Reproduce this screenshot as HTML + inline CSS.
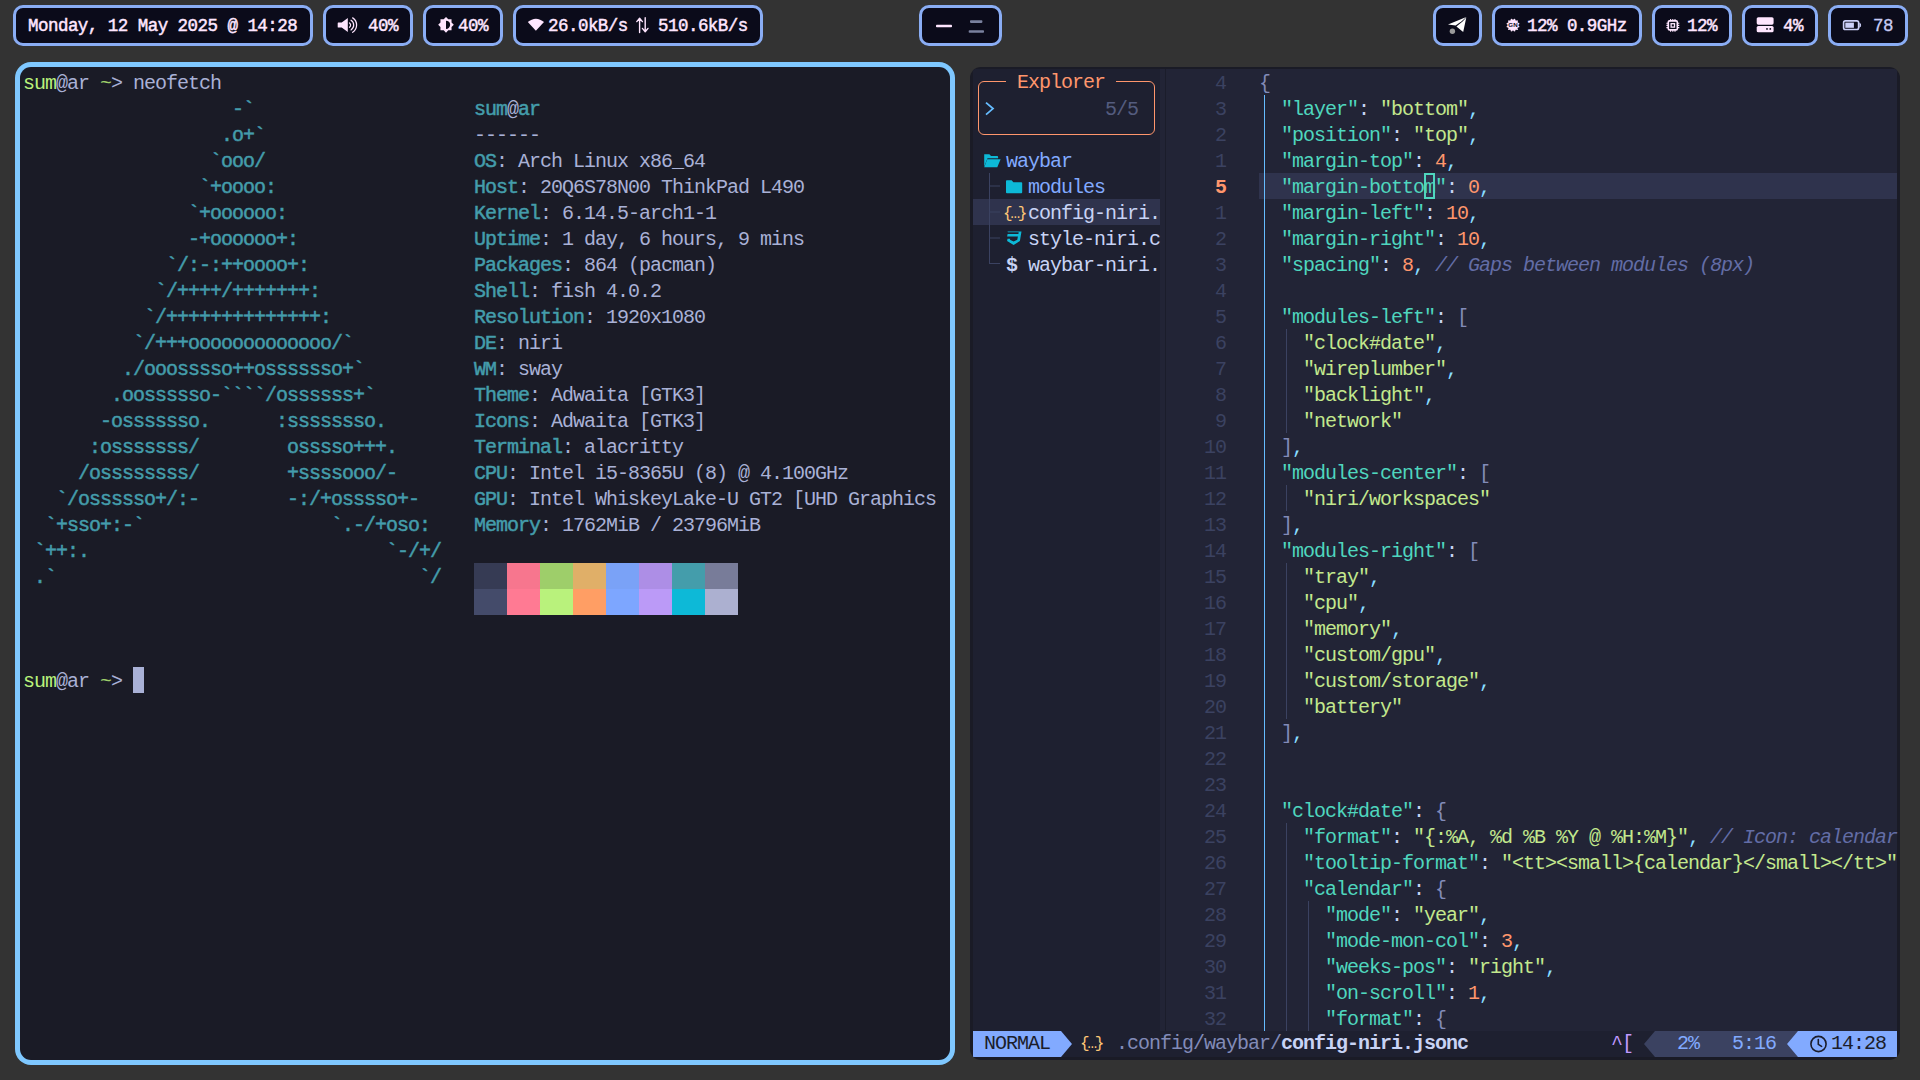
<!DOCTYPE html>
<html><head><meta charset="utf-8">
<style>
html,body{margin:0;padding:0}
body{width:1920px;height:1080px;overflow:hidden;background:#333333;position:relative;font-family:"Liberation Mono",monospace}
.t{position:absolute;height:26px;line-height:26px;white-space:pre;font-size:20px;letter-spacing:-1px}
.blk{position:absolute;width:33px;height:26px}
.mod{position:absolute;top:5px;height:35px;border:3px solid #8aadf4;border-radius:10px;background:#0b0b1a;box-sizing:content-box}
.wt{position:absolute;top:6px;height:41px;line-height:41px;white-space:pre;font-size:17.5px;letter-spacing:-0.53px;font-weight:normal;-webkit-text-stroke:0.45px #ffe6ff;color:#ffe6ff}
</style></head><body>
<div id="desk">
<div class="mod" style="left:13px;width:294px"></div>
<div class="mod" style="left:323px;width:84px"></div>
<div class="mod" style="left:423px;width:74px"></div>
<div class="mod" style="left:513px;width:244px"></div>
<div class="mod" style="left:919px;width:77px"></div>
<div class="mod" style="left:1433px;width:43px"></div>
<div class="mod" style="left:1492px;width:144px"></div>
<div class="mod" style="left:1652px;width:74px"></div>
<div class="mod" style="left:1742px;width:70px"></div>
<div class="mod" style="left:1828px;width:74px"></div>
<div class="wt" style="left:28px">Monday, 12 May 2025 @ 14:28</div>
<div class="wt" style="left:368px">40%</div>
<div class="wt" style="left:458px">40%</div>
<div class="wt" style="left:548px">26.0kB/s</div>
<div class="wt" style="left:658px">510.6kB/s</div>
<div class="wt" style="left:1527px">12% 0.9GHz</div>
<div class="wt" style="left:1687px">12%</div>
<div class="wt" style="left:1783px">4%</div>
<div class="wt" style="left:1873px;color:#c8ccf5;-webkit-text-stroke:0.3px #c8ccf5">78</div>
<svg style="position:absolute;left:0;top:0" width="1920" height="50"><path d="M338.3 22.6 h3.4 l6.1 -4.6 v14.1 l-6.1 -4.6 h-3.4 a0.6 0.6 0 0 1 -0.6 -0.6 v-3.7 a0.6 0.6 0 0 1 0.6 -0.6z" fill="#ffe6ff"/><path d="M349.49 22.97 A2.6 2.6 0 0 1 349.49 27.23 M351.02 20.27 A5.7 5.7 0 0 1 351.02 29.93 M352.68 17.89 A8.6 8.6 0 0 1 352.68 32.31" fill="none" stroke="#ffe6ff" stroke-width="1.25" stroke-linecap="round"/><g transform="translate(437.7 16.5) scale(0.692)"><path fill-rule="evenodd" d="M12,18V6A6,6 0 0,1 18,12A6,6 0 0,1 12,18M20,15.31L23.31,12L20,8.69V4H15.31L12,0.69L8.69,4H4V8.69L0.69,12L4,15.31V20H8.69L12,23.31L15.31,20H20V15.31Z" fill="#ffe6ff"/></g><g transform="translate(527.8 16.6) scale(0.675)"><path d="M12,3C7.79,3 3.7,4.95 0,7.86L12,21L24,7.86C20.3,4.94 16.21,3 12,3Z" fill="#ffe6ff"/></g><path d="M639.6 32.5 V18.5 M636.8 21.6 L639.6 18.2 L642.4 21.6 M645.2 17.8 V31.6 M642.4 28.4 L645.2 31.8 L648 28.4" fill="none" stroke="#ffe6ff" stroke-width="1.4" stroke-linecap="round" stroke-linejoin="round"/><rect x="936" y="24.7" width="16" height="2.6" rx="0.8" fill="#ffe6ff"/><rect x="970" y="20.3" width="12.4" height="2.6" rx="0.8" fill="#7a819e"/><rect x="968.7" y="30.2" width="15.3" height="2.6" rx="0.8" fill="#7a819e"/><path d="M1448 24.6 L1466.3 16.9 L1461.6 21.2 L1455.6 25.6 Z" fill="#ffffff"/><path d="M1456.4 26.6 L1462.6 21.5 L1466.3 17.6 L1463.2 32 Z" fill="#ffffff"/><circle cx="1452.4" cy="31.2" r="2.7" fill="#9a9a9a"/><circle cx="1513" cy="25.1" r="5.6" fill="#ffe6ff"/><circle cx="1518.51" cy="26.58" r="0.9" fill="#ffe6ff"/><circle cx="1517.03" cy="29.13" r="0.9" fill="#ffe6ff"/><circle cx="1514.48" cy="30.61" r="0.9" fill="#ffe6ff"/><circle cx="1511.52" cy="30.61" r="0.9" fill="#ffe6ff"/><circle cx="1508.97" cy="29.13" r="0.9" fill="#ffe6ff"/><circle cx="1507.49" cy="26.58" r="0.9" fill="#ffe6ff"/><circle cx="1507.49" cy="23.62" r="0.9" fill="#ffe6ff"/><circle cx="1508.97" cy="21.07" r="0.9" fill="#ffe6ff"/><circle cx="1511.52" cy="19.59" r="0.9" fill="#ffe6ff"/><circle cx="1514.48" cy="19.59" r="0.9" fill="#ffe6ff"/><circle cx="1517.03" cy="21.07" r="0.9" fill="#ffe6ff"/><circle cx="1518.51" cy="23.62" r="0.9" fill="#ffe6ff"/><text x="1513" y="27.3" font-family="Liberation Sans" font-weight="bold" font-size="6.2" text-anchor="middle" fill="#0b0b1a">GN</text><rect x="1668.3" y="20.9" width="9" height="9" rx="1.2" fill="none" stroke="#ffe6ff" stroke-width="1.6"/><rect x="1671.1" y="23.7" width="3.4" height="3.4" fill="none" stroke="#ffe6ff" stroke-width="1.3"/><path d="M1670.6 19 v2.2 M1670.6 29.6 v2.2 M1666.4 23.2 h2.2 M1677.1 23.2 h2.2 M1672.8 19 v2.2 M1672.8 29.6 v2.2 M1666.4 25.4 h2.2 M1677.1 25.4 h2.2 M1675.0 19 v2.2 M1675.0 29.6 v2.2 M1666.4 27.6 h2.2 M1677.1 27.6 h2.2" stroke="#ffe6ff" stroke-width="1.1"/><rect x="1756.7" y="17.2" width="16.9" height="7.5" rx="1.6" fill="#ffe6ff"/><rect x="1756.7" y="26" width="16.9" height="6.3" rx="1.6" fill="#ffe6ff"/><circle cx="1767" cy="28.9" r="0.9" fill="#0b0b1a"/><circle cx="1770.3" cy="28.9" r="0.9" fill="#0b0b1a"/><rect x="1843.6" y="20.9" width="15" height="8.6" rx="1.8" fill="none" stroke="#ccd0f8" stroke-width="1.6"/><rect x="1845.3" y="22.6" width="8.6" height="5.2" fill="#ccd0f8"/><path d="M1859.4 23.2 a1.2 2 0 0 1 0 4" fill="#ccd0f8" stroke="#ccd0f8" stroke-width="1"/></svg>
</div>
<div style="position:absolute;left:15px;top:62px;width:940px;height:1003px;border-radius:16px;background:#7fc8ff"></div>
<div style="position:absolute;left:20px;top:67px;width:930px;height:993px;border-radius:11px;background:#1a1b26;overflow:hidden">
<div style="position:absolute;left:-20px;top:-67px">
<div class="t" style="left:23px;top:71px;color:#b9f27c">sum</div>
<div class="t" style="left:56px;top:71px;color:#a9b1d6">@ar</div>
<div class="t" style="left:100px;top:71px;color:#9ece6a">~</div>
<div class="t" style="left:111px;top:71px;color:#a9b1d6">&gt;</div>
<div class="t" style="left:133px;top:71px;color:#a9b1d6">neofetch</div>
<div class="t" style="left:232px;top:97px;color:#449dab;-webkit-text-stroke:0.5px #449dab">-`</div>
<div class="t" style="left:221px;top:123px;color:#449dab;-webkit-text-stroke:0.5px #449dab">.o+`</div>
<div class="t" style="left:210px;top:149px;color:#449dab;-webkit-text-stroke:0.5px #449dab">`ooo/</div>
<div class="t" style="left:199px;top:175px;color:#449dab;-webkit-text-stroke:0.5px #449dab">`+oooo:</div>
<div class="t" style="left:188px;top:201px;color:#449dab;-webkit-text-stroke:0.5px #449dab">`+oooooo:</div>
<div class="t" style="left:188px;top:227px;color:#449dab;-webkit-text-stroke:0.5px #449dab">-+oooooo+:</div>
<div class="t" style="left:166px;top:253px;color:#449dab;-webkit-text-stroke:0.5px #449dab">`/:-:++oooo+:</div>
<div class="t" style="left:155px;top:279px;color:#449dab;-webkit-text-stroke:0.5px #449dab">`/++++/+++++++:</div>
<div class="t" style="left:144px;top:305px;color:#449dab;-webkit-text-stroke:0.5px #449dab">`/++++++++++++++:</div>
<div class="t" style="left:133px;top:331px;color:#449dab;-webkit-text-stroke:0.5px #449dab">`/+++ooooooooooooo/`</div>
<div class="t" style="left:122px;top:357px;color:#449dab;-webkit-text-stroke:0.5px #449dab">./ooosssso++osssssso+`</div>
<div class="t" style="left:111px;top:383px;color:#449dab;-webkit-text-stroke:0.5px #449dab">.oossssso-````/ossssss+`</div>
<div class="t" style="left:100px;top:409px;color:#449dab;-webkit-text-stroke:0.5px #449dab">-osssssso.      :ssssssso.</div>
<div class="t" style="left:89px;top:435px;color:#449dab;-webkit-text-stroke:0.5px #449dab">:osssssss/        osssso+++.</div>
<div class="t" style="left:78px;top:461px;color:#449dab;-webkit-text-stroke:0.5px #449dab">/ossssssss/        +ssssooo/-</div>
<div class="t" style="left:56px;top:487px;color:#449dab;-webkit-text-stroke:0.5px #449dab">`/ossssso+/:-        -:/+osssso+-</div>
<div class="t" style="left:45px;top:513px;color:#449dab;-webkit-text-stroke:0.5px #449dab">`+sso+:-`                 `.-/+oso:</div>
<div class="t" style="left:34px;top:539px;color:#449dab;-webkit-text-stroke:0.5px #449dab">`++:.                           `-/+/</div>
<div class="t" style="left:34px;top:565px;color:#449dab;-webkit-text-stroke:0.5px #449dab">.`                                 `/</div>
<div class="t" style="left:474px;top:97px;color:#449dab;-webkit-text-stroke:0.5px #449dab">sum</div>
<div class="t" style="left:507px;top:97px;color:#a9b1d6">@</div>
<div class="t" style="left:518px;top:97px;color:#449dab;-webkit-text-stroke:0.5px #449dab">ar</div>
<div class="t" style="left:474px;top:123px;color:#a9b1d6">------</div>
<div class="t" style="left:474px;top:149px;color:#449dab;-webkit-text-stroke:0.5px #449dab">OS</div>
<div class="t" style="left:496px;top:149px;color:#a9b1d6">: Arch Linux x86_64</div>
<div class="t" style="left:474px;top:175px;color:#449dab;-webkit-text-stroke:0.5px #449dab">Host</div>
<div class="t" style="left:518px;top:175px;color:#a9b1d6">: 20Q6S78N00 ThinkPad L490</div>
<div class="t" style="left:474px;top:201px;color:#449dab;-webkit-text-stroke:0.5px #449dab">Kernel</div>
<div class="t" style="left:540px;top:201px;color:#a9b1d6">: 6.14.5-arch1-1</div>
<div class="t" style="left:474px;top:227px;color:#449dab;-webkit-text-stroke:0.5px #449dab">Uptime</div>
<div class="t" style="left:540px;top:227px;color:#a9b1d6">: 1 day, 6 hours, 9 mins</div>
<div class="t" style="left:474px;top:253px;color:#449dab;-webkit-text-stroke:0.5px #449dab">Packages</div>
<div class="t" style="left:562px;top:253px;color:#a9b1d6">: 864 (pacman)</div>
<div class="t" style="left:474px;top:279px;color:#449dab;-webkit-text-stroke:0.5px #449dab">Shell</div>
<div class="t" style="left:529px;top:279px;color:#a9b1d6">: fish 4.0.2</div>
<div class="t" style="left:474px;top:305px;color:#449dab;-webkit-text-stroke:0.5px #449dab">Resolution</div>
<div class="t" style="left:584px;top:305px;color:#a9b1d6">: 1920x1080</div>
<div class="t" style="left:474px;top:331px;color:#449dab;-webkit-text-stroke:0.5px #449dab">DE</div>
<div class="t" style="left:496px;top:331px;color:#a9b1d6">: niri</div>
<div class="t" style="left:474px;top:357px;color:#449dab;-webkit-text-stroke:0.5px #449dab">WM</div>
<div class="t" style="left:496px;top:357px;color:#a9b1d6">: sway</div>
<div class="t" style="left:474px;top:383px;color:#449dab;-webkit-text-stroke:0.5px #449dab">Theme</div>
<div class="t" style="left:529px;top:383px;color:#a9b1d6">: Adwaita [GTK3]</div>
<div class="t" style="left:474px;top:409px;color:#449dab;-webkit-text-stroke:0.5px #449dab">Icons</div>
<div class="t" style="left:529px;top:409px;color:#a9b1d6">: Adwaita [GTK3]</div>
<div class="t" style="left:474px;top:435px;color:#449dab;-webkit-text-stroke:0.5px #449dab">Terminal</div>
<div class="t" style="left:562px;top:435px;color:#a9b1d6">: alacritty</div>
<div class="t" style="left:474px;top:461px;color:#449dab;-webkit-text-stroke:0.5px #449dab">CPU</div>
<div class="t" style="left:507px;top:461px;color:#a9b1d6">: Intel i5-8365U (8) @ 4.100GHz</div>
<div class="t" style="left:474px;top:487px;color:#449dab;-webkit-text-stroke:0.5px #449dab">GPU</div>
<div class="t" style="left:507px;top:487px;color:#a9b1d6">: Intel WhiskeyLake-U GT2 [UHD Graphics</div>
<div class="t" style="left:474px;top:513px;color:#449dab;-webkit-text-stroke:0.5px #449dab">Memory</div>
<div class="t" style="left:540px;top:513px;color:#a9b1d6">: 1762MiB / 23796MiB</div>
<div class="blk" style="left:474px;top:563px;background:#363b54"></div>
<div class="blk" style="left:474px;top:589px;background:#444b6a"></div>
<div class="blk" style="left:507px;top:563px;background:#f7768e"></div>
<div class="blk" style="left:507px;top:589px;background:#ff7a93"></div>
<div class="blk" style="left:540px;top:563px;background:#9ece6a"></div>
<div class="blk" style="left:540px;top:589px;background:#b9f27c"></div>
<div class="blk" style="left:573px;top:563px;background:#e0af68"></div>
<div class="blk" style="left:573px;top:589px;background:#ff9e64"></div>
<div class="blk" style="left:606px;top:563px;background:#7aa2f7"></div>
<div class="blk" style="left:606px;top:589px;background:#7da6ff"></div>
<div class="blk" style="left:639px;top:563px;background:#ad8ee6"></div>
<div class="blk" style="left:639px;top:589px;background:#bb9af7"></div>
<div class="blk" style="left:672px;top:563px;background:#449dab"></div>
<div class="blk" style="left:672px;top:589px;background:#0db9d7"></div>
<div class="blk" style="left:705px;top:563px;background:#787c99"></div>
<div class="blk" style="left:705px;top:589px;background:#acb0d0"></div>
<div class="t" style="left:23px;top:669px;color:#b9f27c">sum</div>
<div class="t" style="left:56px;top:669px;color:#a9b1d6">@ar</div>
<div class="t" style="left:100px;top:669px;color:#9ece6a">~</div>
<div class="t" style="left:111px;top:669px;color:#a9b1d6">&gt;</div>
<div style="position:absolute;left:133px;top:667px;width:11px;height:26px;background:#a9b1d6"></div>
</div></div>
<div style="position:absolute;left:970px;top:67px;width:930px;height:993px;border-radius:11px;background:#1a1b26;overflow:hidden">
<div style="position:absolute;left:-970px;top:-67px">
<div style="position:absolute;left:973px;top:69px;width:187px;height:962px;background:#1e2030"></div>
<div style="position:absolute;left:1160px;top:69px;width:737px;height:962px;background:#222436"></div>
<div style="position:absolute;left:1165px;top:69px;width:1px;height:962px;background:#1b1d2b"></div>
<div style="position:absolute;left:973px;top:199px;width:187px;height:26px;background:#2f334d"></div>
<div style="position:absolute;left:1259px;top:173px;width:638px;height:26px;background:#2f334d"></div>
<div style="position:absolute;left:978px;top:81px;width:175px;height:52px;border:1px solid #ff966c;border-radius:6px;box-sizing:content-box"></div>
<div style="position:absolute;left:1006px;top:77px;width:110px;height:10px;background:#1e2030"></div>
<div class="t" style="left:1017px;top:70px;color:#ff966c">Explorer</div>
<div class="t" style="left:1105px;top:97px;color:#545c7e">5/5</div>
<svg style="position:absolute;left:0;top:0" width="1920" height="1080"><path d="M986 102.6 L993 108.6 L986 114.6" fill="none" stroke="#65bcff" stroke-width="1.8"/></svg>
<div class="t" style="left:1006px;top:149px;color:#82aaff">waybar</div>
<div class="t" style="left:1028px;top:175px;color:#82aaff">modules</div>
<div class="t" style="left:1028px;top:201px;color:#c8d3f5">config-niri.</div>
<div class="t" style="left:1028px;top:227px;color:#c8d3f5">style-niri.c</div>
<div class="t" style="left:1006px;top:253px;color:#c8d3f5;font-weight:bold">$</div>
<div class="t" style="left:1028px;top:253px;color:#c8d3f5">waybar-niri.</div>
<div class="t" style="left:1215px;top:71px;color:#3b4261">4</div>
<div class="t" style="left:1215px;top:97px;color:#3b4261">3</div>
<div class="t" style="left:1215px;top:123px;color:#3b4261">2</div>
<div class="t" style="left:1215px;top:149px;color:#3b4261">1</div>
<div class="t" style="left:1215px;top:175px;color:#ff966c;font-weight:bold">5</div>
<div class="t" style="left:1215px;top:201px;color:#3b4261">1</div>
<div class="t" style="left:1215px;top:227px;color:#3b4261">2</div>
<div class="t" style="left:1215px;top:253px;color:#3b4261">3</div>
<div class="t" style="left:1215px;top:279px;color:#3b4261">4</div>
<div class="t" style="left:1215px;top:305px;color:#3b4261">5</div>
<div class="t" style="left:1215px;top:331px;color:#3b4261">6</div>
<div class="t" style="left:1215px;top:357px;color:#3b4261">7</div>
<div class="t" style="left:1215px;top:383px;color:#3b4261">8</div>
<div class="t" style="left:1215px;top:409px;color:#3b4261">9</div>
<div class="t" style="left:1204px;top:435px;color:#3b4261">10</div>
<div class="t" style="left:1204px;top:461px;color:#3b4261">11</div>
<div class="t" style="left:1204px;top:487px;color:#3b4261">12</div>
<div class="t" style="left:1204px;top:513px;color:#3b4261">13</div>
<div class="t" style="left:1204px;top:539px;color:#3b4261">14</div>
<div class="t" style="left:1204px;top:565px;color:#3b4261">15</div>
<div class="t" style="left:1204px;top:591px;color:#3b4261">16</div>
<div class="t" style="left:1204px;top:617px;color:#3b4261">17</div>
<div class="t" style="left:1204px;top:643px;color:#3b4261">18</div>
<div class="t" style="left:1204px;top:669px;color:#3b4261">19</div>
<div class="t" style="left:1204px;top:695px;color:#3b4261">20</div>
<div class="t" style="left:1204px;top:721px;color:#3b4261">21</div>
<div class="t" style="left:1204px;top:747px;color:#3b4261">22</div>
<div class="t" style="left:1204px;top:773px;color:#3b4261">23</div>
<div class="t" style="left:1204px;top:799px;color:#3b4261">24</div>
<div class="t" style="left:1204px;top:825px;color:#3b4261">25</div>
<div class="t" style="left:1204px;top:851px;color:#3b4261">26</div>
<div class="t" style="left:1204px;top:877px;color:#3b4261">27</div>
<div class="t" style="left:1204px;top:903px;color:#3b4261">28</div>
<div class="t" style="left:1204px;top:929px;color:#3b4261">29</div>
<div class="t" style="left:1204px;top:955px;color:#3b4261">30</div>
<div class="t" style="left:1204px;top:981px;color:#3b4261">31</div>
<div class="t" style="left:1204px;top:1007px;color:#3b4261">32</div>
<div class="t" style="left:1259px;top:71px;color:#828bb8">{</div>
<div class="t" style="left:1281px;top:97px;color:#4fd6be">"layer"</div>
<div class="t" style="left:1358px;top:97px;color:#c8d3f5">:</div>
<div class="t" style="left:1380px;top:97px;color:#c3e88d">"bottom"</div>
<div class="t" style="left:1468px;top:97px;color:#89ddff">,</div>
<div class="t" style="left:1281px;top:123px;color:#4fd6be">"position"</div>
<div class="t" style="left:1391px;top:123px;color:#c8d3f5">:</div>
<div class="t" style="left:1413px;top:123px;color:#c3e88d">"top"</div>
<div class="t" style="left:1468px;top:123px;color:#89ddff">,</div>
<div class="t" style="left:1281px;top:149px;color:#4fd6be">"margin-top"</div>
<div class="t" style="left:1413px;top:149px;color:#c8d3f5">:</div>
<div class="t" style="left:1435px;top:149px;color:#ff966c">4</div>
<div class="t" style="left:1446px;top:149px;color:#89ddff">,</div>
<div class="t" style="left:1281px;top:175px;color:#4fd6be">"margin-bottom"</div>
<div class="t" style="left:1446px;top:175px;color:#c8d3f5">:</div>
<div class="t" style="left:1468px;top:175px;color:#ff966c">0</div>
<div class="t" style="left:1479px;top:175px;color:#89ddff">,</div>
<div class="t" style="left:1281px;top:201px;color:#4fd6be">"margin-left"</div>
<div class="t" style="left:1424px;top:201px;color:#c8d3f5">:</div>
<div class="t" style="left:1446px;top:201px;color:#ff966c">10</div>
<div class="t" style="left:1468px;top:201px;color:#89ddff">,</div>
<div class="t" style="left:1281px;top:227px;color:#4fd6be">"margin-right"</div>
<div class="t" style="left:1435px;top:227px;color:#c8d3f5">:</div>
<div class="t" style="left:1457px;top:227px;color:#ff966c">10</div>
<div class="t" style="left:1479px;top:227px;color:#89ddff">,</div>
<div class="t" style="left:1281px;top:253px;color:#4fd6be">"spacing"</div>
<div class="t" style="left:1380px;top:253px;color:#c8d3f5">:</div>
<div class="t" style="left:1402px;top:253px;color:#ff966c">8</div>
<div class="t" style="left:1413px;top:253px;color:#89ddff">,</div>
<div class="t" style="left:1435px;top:253px;color:#636da6;font-style:italic">// Gaps between modules (8px)</div>
<div class="t" style="left:1281px;top:305px;color:#4fd6be">"modules-left"</div>
<div class="t" style="left:1435px;top:305px;color:#c8d3f5">:</div>
<div class="t" style="left:1457px;top:305px;color:#828bb8">[</div>
<div class="t" style="left:1303px;top:331px;color:#c3e88d">"clock#date"</div>
<div class="t" style="left:1435px;top:331px;color:#89ddff">,</div>
<div class="t" style="left:1303px;top:357px;color:#c3e88d">"wireplumber"</div>
<div class="t" style="left:1446px;top:357px;color:#89ddff">,</div>
<div class="t" style="left:1303px;top:383px;color:#c3e88d">"backlight"</div>
<div class="t" style="left:1424px;top:383px;color:#89ddff">,</div>
<div class="t" style="left:1303px;top:409px;color:#c3e88d">"network"</div>
<div class="t" style="left:1281px;top:435px;color:#828bb8">]</div>
<div class="t" style="left:1292px;top:435px;color:#89ddff">,</div>
<div class="t" style="left:1281px;top:461px;color:#4fd6be">"modules-center"</div>
<div class="t" style="left:1457px;top:461px;color:#c8d3f5">:</div>
<div class="t" style="left:1479px;top:461px;color:#828bb8">[</div>
<div class="t" style="left:1303px;top:487px;color:#c3e88d">"niri/workspaces"</div>
<div class="t" style="left:1281px;top:513px;color:#828bb8">]</div>
<div class="t" style="left:1292px;top:513px;color:#89ddff">,</div>
<div class="t" style="left:1281px;top:539px;color:#4fd6be">"modules-right"</div>
<div class="t" style="left:1446px;top:539px;color:#c8d3f5">:</div>
<div class="t" style="left:1468px;top:539px;color:#828bb8">[</div>
<div class="t" style="left:1303px;top:565px;color:#c3e88d">"tray"</div>
<div class="t" style="left:1369px;top:565px;color:#89ddff">,</div>
<div class="t" style="left:1303px;top:591px;color:#c3e88d">"cpu"</div>
<div class="t" style="left:1358px;top:591px;color:#89ddff">,</div>
<div class="t" style="left:1303px;top:617px;color:#c3e88d">"memory"</div>
<div class="t" style="left:1391px;top:617px;color:#89ddff">,</div>
<div class="t" style="left:1303px;top:643px;color:#c3e88d">"custom/gpu"</div>
<div class="t" style="left:1435px;top:643px;color:#89ddff">,</div>
<div class="t" style="left:1303px;top:669px;color:#c3e88d">"custom/storage"</div>
<div class="t" style="left:1479px;top:669px;color:#89ddff">,</div>
<div class="t" style="left:1303px;top:695px;color:#c3e88d">"battery"</div>
<div class="t" style="left:1281px;top:721px;color:#828bb8">]</div>
<div class="t" style="left:1292px;top:721px;color:#89ddff">,</div>
<div class="t" style="left:1281px;top:799px;color:#4fd6be">"clock#date"</div>
<div class="t" style="left:1413px;top:799px;color:#c8d3f5">:</div>
<div class="t" style="left:1435px;top:799px;color:#828bb8">{</div>
<div class="t" style="left:1303px;top:825px;color:#4fd6be">"format"</div>
<div class="t" style="left:1391px;top:825px;color:#c8d3f5">:</div>
<div class="t" style="left:1413px;top:825px;color:#c3e88d">"{:%A, %d %B %Y @ %H:%M}"</div>
<div class="t" style="left:1688px;top:825px;color:#89ddff">,</div>
<div class="t" style="left:1710px;top:825px;color:#636da6;font-style:italic">// Icon: calendar</div>
<div class="t" style="left:1303px;top:851px;color:#4fd6be">"tooltip-format"</div>
<div class="t" style="left:1479px;top:851px;color:#c8d3f5">:</div>
<div class="t" style="left:1501px;top:851px;color:#c3e88d">"&lt;tt&gt;&lt;small&gt;{calendar}&lt;/small&gt;&lt;/tt&gt;"</div>
<div class="t" style="left:1303px;top:877px;color:#4fd6be">"calendar"</div>
<div class="t" style="left:1413px;top:877px;color:#c8d3f5">:</div>
<div class="t" style="left:1435px;top:877px;color:#828bb8">{</div>
<div class="t" style="left:1325px;top:903px;color:#4fd6be">"mode"</div>
<div class="t" style="left:1391px;top:903px;color:#c8d3f5">:</div>
<div class="t" style="left:1413px;top:903px;color:#c3e88d">"year"</div>
<div class="t" style="left:1479px;top:903px;color:#89ddff">,</div>
<div class="t" style="left:1325px;top:929px;color:#4fd6be">"mode-mon-col"</div>
<div class="t" style="left:1479px;top:929px;color:#c8d3f5">:</div>
<div class="t" style="left:1501px;top:929px;color:#ff966c">3</div>
<div class="t" style="left:1512px;top:929px;color:#89ddff">,</div>
<div class="t" style="left:1325px;top:955px;color:#4fd6be">"weeks-pos"</div>
<div class="t" style="left:1446px;top:955px;color:#c8d3f5">:</div>
<div class="t" style="left:1468px;top:955px;color:#c3e88d">"right"</div>
<div class="t" style="left:1545px;top:955px;color:#89ddff">,</div>
<div class="t" style="left:1325px;top:981px;color:#4fd6be">"on-scroll"</div>
<div class="t" style="left:1446px;top:981px;color:#c8d3f5">:</div>
<div class="t" style="left:1468px;top:981px;color:#ff966c">1</div>
<div class="t" style="left:1479px;top:981px;color:#89ddff">,</div>
<div class="t" style="left:1325px;top:1007px;color:#4fd6be">"format"</div>
<div class="t" style="left:1413px;top:1007px;color:#c8d3f5">:</div>
<div class="t" style="left:1435px;top:1007px;color:#828bb8">{</div>
<div style="position:absolute;left:1264px;top:95px;width:1px;height:936px;background:#65bcff"></div>
<div style="position:absolute;left:1286px;top:329px;width:1px;height:104px;background:#3b4261"></div>
<div style="position:absolute;left:1286px;top:485px;width:1px;height:26px;background:#3b4261"></div>
<div style="position:absolute;left:1286px;top:563px;width:1px;height:156px;background:#3b4261"></div>
<div style="position:absolute;left:1286px;top:823px;width:1px;height:208px;background:#3b4261"></div>
<div style="position:absolute;left:1308px;top:901px;width:1px;height:130px;background:#3b4261"></div>
<div style="position:absolute;left:973px;top:1031px;width:924px;height:26px;background:#1e2030"></div>
<div style="position:absolute;left:973px;top:1031px;width:88px;height:26px;background:#82aaff"></div>
<svg style="position:absolute;left:1061px;top:1031px" width="11" height="26"><path d="M0 0 L11 13 L0 26 Z" fill="#82aaff"/></svg>
<div class="t" style="left:984px;top:1031px;color:#1b1d2b">NORMAL</div>
<div class="t" style="left:1116px;top:1031px;color:#828bb8">.config/waybar/</div>
<div class="t" style="left:1281px;top:1031px;color:#c8d3f5;font-weight:bold">config-niri.jsonc</div>
<div class="t" style="left:1611px;top:1031px;color:#c099ff">^[</div>
<div style="position:absolute;left:1655px;top:1031px;width:143px;height:26px;background:#3b4261"></div>
<svg style="position:absolute;left:1644px;top:1031px" width="11" height="26"><path d="M11 0 L0 13 L11 26 Z" fill="#3b4261"/></svg>
<div style="position:absolute;left:1798px;top:1031px;width:99px;height:26px;background:#82aaff"></div>
<svg style="position:absolute;left:1787px;top:1031px" width="11" height="26"><path d="M11 0 L0 13 L11 26 Z" fill="#82aaff"/></svg>
<div class="t" style="left:1677px;top:1031px;color:#82aaff">2%</div>
<div class="t" style="left:1732px;top:1031px;color:#82aaff">5:16</div>
<div class="t" style="left:1831px;top:1031px;color:#1b1d2b">14:28</div>
<svg style="position:absolute;left:0;top:0" width="1920" height="1080"><path d="M984.2 154.2 h5.2 l1.6 1.8 h6.2 a0.9 0.9 0 0 1 0.9 0.9 v1.3 h-10.6 l-3.3 8.6 z" fill="#0db9d7"/><path d="M987.2 159.2 h13.4 l-3.3 8 h-13.1 z" fill="#0db9d7"/><path d="M1006 180.2 h5.6 l1.8 2 h7.9 a0.9 0.9 0 0 1 0.9 0.9 v9.2 a0.9 0.9 0 0 1 -0.9 0.9 h-14.4 a0.9 0.9 0 0 1 -0.9 -0.9 v-11.2 a0.9 0.9 0 0 1 0.9 -0.9z" fill="#0db9d7"/><path d="M1007.5 231.5 h14 l-1.6 9.6 l-6.3 3.8 l-6.5 -3.8 l0.4 -2.4 h2.7 l-0.2 1 l3.6 1.9 l3.7 -1.9 l0.6 -3.2 h-10.8 l0.5 -2.4 h10.8 l0.3 -1.8 h-10.8 z" fill="#0db9d7"/><path d="M989.5 173 V264 M989.5 186 H1000 M989.5 212 H1000 M989.5 238 H1000 M989.5 263.5 H1000" stroke="#3b4261" stroke-width="1" fill="none"/></svg>
<div class="t" style="left:1003px;top:201px;color:#ffc777;font-size:16px;letter-spacing:-2.2px">{…}</div>
<div class="t" style="left:1080px;top:1031px;color:#ffc777;font-size:16px;letter-spacing:-2.2px">{…}</div>
<div style="position:absolute;left:1424px;top:173px;width:11px;height:26px;border:2px solid #4fd6be;box-sizing:border-box"></div>
<svg style="position:absolute;left:0;top:0" width="1920" height="1080"><circle cx="1818.5" cy="1044" r="7.6" fill="none" stroke="#1b1d2b" stroke-width="1.6"/><path d="M1818.3 1039.6 V1044.4 L1821.6 1046.4" fill="none" stroke="#1b1d2b" stroke-width="1.6" stroke-linecap="round"/></svg>
</div></div>
</body></html>
